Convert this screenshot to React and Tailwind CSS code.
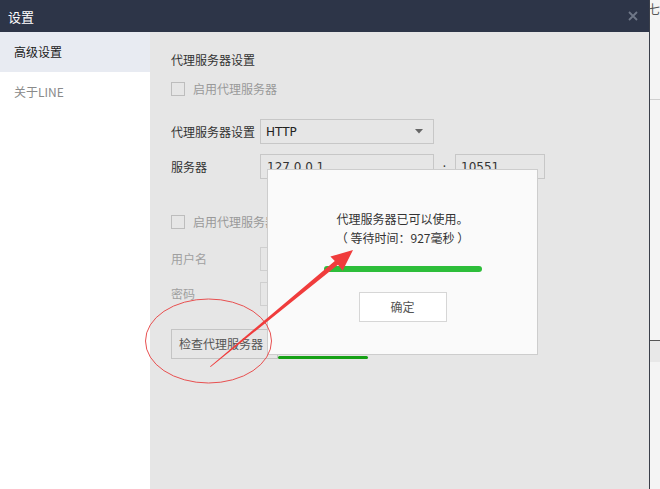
export default function App() {
  const font = { fontFamily: '"Noto Sans CJK SC", "Noto Sans", sans-serif' };

  return (
    <div className="relative w-[660px] h-[489px] overflow-hidden bg-[#f2f2f2] text-[12px]" style={font}>
      <div className="flex h-full">
        {/* settings window */}
        <div className="flex flex-col w-[653px] h-full border-r border-[#3a3f4a]">
          <div className="flex items-center justify-between h-[32px] bg-[#2d3548] pl-[8px] pr-[11px] shrink-0">
            <span className="text-white text-[13px] leading-none">设置</span>
            <svg width="10" height="10" viewBox="0 0 10 10">
              <path d="M1 1L9 9M9 1L1 9" stroke="#6f7888" strokeWidth="1.8" />
            </svg>
          </div>
          <div className="flex flex-1">
            <div className="w-[150px] bg-white shrink-0">
              <div className="h-[40px] bg-[#e8ebf2] flex items-center pl-[14px] text-[#1a1a1a]">高级设置</div>
              <div className="h-[40px] flex items-center pl-[14px] text-[#8a8a8a]">关于LINE</div>
            </div>
            <div className="flex-1 bg-[#e6e6e6] pl-[21px] pt-[19px] text-[#333]">
              <div className="h-[18px] leading-[18px]">代理服务器设置</div>
              <div className="flex items-center gap-[8px] mt-[13px] h-[14px] text-[#999]">
                <span className="w-[14px] h-[14px] border border-[#bdbdbd] inline-block" />
                <span>启用代理服务器</span>
              </div>
              <div className="flex items-center mt-[23px] h-[25px]">
                <span className="w-[89px]">代理服务器设置</span>
                <div className="w-[174px] h-[25px] border border-[#c7c7c7] flex items-center justify-between pl-[5px] pr-[10px]">
                  <span className="text-[#222]" style={{ fontFamily: '"DejaVu Sans", sans-serif', fontSize: '12px' }}>HTTP</span>
                  <svg width="8" height="5" viewBox="0 0 8 5">
                    <path d="M0 0H8L4 4.5Z" fill="#666" />
                  </svg>
                </div>
              </div>
              <div className="flex items-center mt-[10px] h-[25px]">
                <span className="w-[89px]">服务器</span>
                <div className="w-[174px] h-[25px] border border-[#c7c7c7] flex items-center pl-[6px]" style={{ fontFamily: '"DejaVu Sans", sans-serif' }}>127.0.0.1</div>
                <span className="w-[21px] text-center">:</span>
                <div className="w-[90px] h-[25px] border border-[#c7c7c7] flex items-center pl-[5px]" style={{ fontFamily: '"DejaVu Sans", sans-serif' }}>10551</div>
              </div>
              <div className="flex items-center gap-[8px] mt-[36px] h-[14px] text-[#999]">
                <span className="w-[14px] h-[14px] border border-[#bdbdbd] inline-block" />
                <span>启用代理服务器认证</span>
              </div>
              <div className="flex items-center mt-[18px] h-[24px] text-[#a0a0a0]">
                <span className="w-[89px]">用户名</span>
                <div className="w-[174px] h-[24px] border border-[#cfcfcf]" />
              </div>
              <div className="flex items-center mt-[11px] h-[24px] text-[#a0a0a0]">
                <span className="w-[89px]">密码</span>
                <div className="w-[174px] h-[24px] border border-[#cfcfcf]" />
              </div>
              <div className="flex items-end mt-[23px]">
                <div className="h-[30px] w-[107px] border border-[#c4c4c4] flex items-center pl-[7px] text-[#555]">检查代理服务器</div>
                <div className="w-[90px] h-[3px] bg-[#15a015] rounded-full" />
              </div>
            </div>
          </div>
        </div>
        {/* background app sliver */}
        <div className="flex-1 relative bg-[#f4f4f4]">
          <div className="h-[100px] border-b border-[#cfcfcf] overflow-hidden">
            <span className="text-[#555] text-[12px] leading-none block pt-[3px] -ml-[2px]">七</span>
          </div>
          <div className="h-[241px] border-b border-[#555]" />
          <div className="h-[21px] bg-[#e8e8e8]" />
        </div>
      </div>

      {/* popup */}
      <div className="absolute left-[267px] top-[169px] w-[271px] h-[186px] bg-[#fafafa] border border-[#cdcdcd] flex flex-col items-center text-[#333]">
        <div className="mt-[39px] leading-[19px] text-center">
          <div>代理服务器已可以使用。</div>
          <div>（ 等待时间：927毫秒 ）</div>
        </div>
        <div className="mt-[19px] w-[158px] h-[6px] bg-[#2dbe3a] rounded-full" />
        <div className="mt-[20px] w-[88px] h-[30px] bg-white border border-[#d6d6d6] flex items-center justify-center text-[#555]">确定</div>
      </div>

      {/* annotations */}
      <svg className="absolute left-0 top-0 pointer-events-none" width="660" height="489" viewBox="0 0 660 489">
        <ellipse cx="208.5" cy="341" rx="63" ry="42" fill="none" stroke="#e85050" strokeWidth="1" />
        <polygon points="210,366.5 334.8,260.9 330.4,256.6 353,250 342.6,270.8 338,264.8 210.6,367" fill="#f03c3c" />
      </svg>
    </div>
  );
}
